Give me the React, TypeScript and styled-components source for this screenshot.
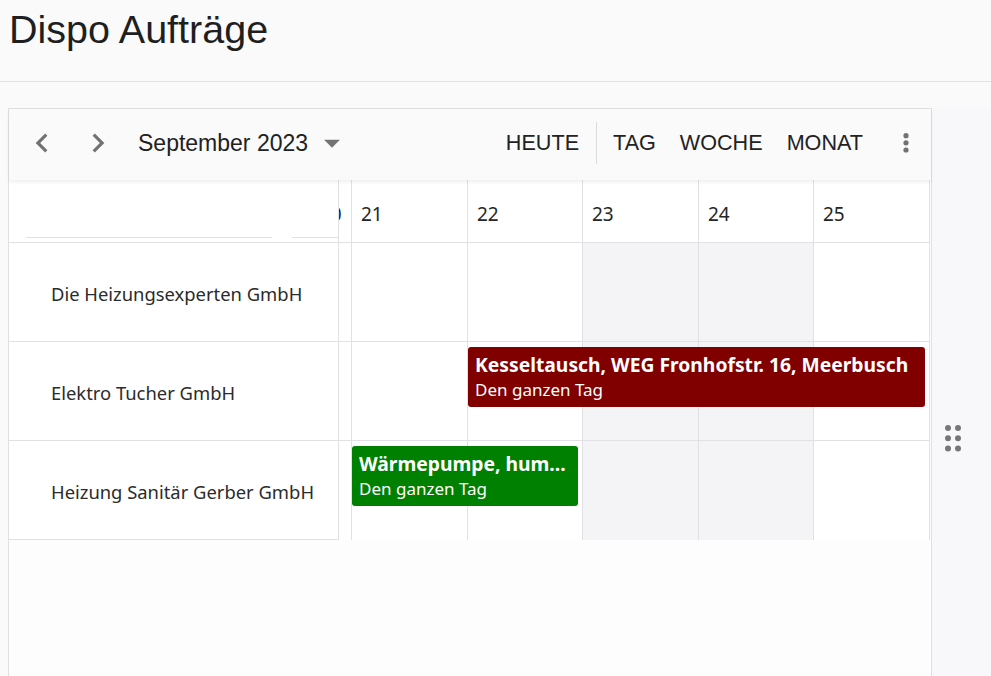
import { createGlobalStyle, styled } from "styled-components";

const GlobalStyle = createGlobalStyle`
  html, body {
    margin: 0;
    padding: 0;
    background: #fafafa;
    font-family: "Liberation Sans", Arial, sans-serif;
    color: #212121;
    overflow: hidden;
  }
`;

interface Booking {
  title: string;
  from: number;
  to: number;
  color: string;
}

interface Resource {
  name: string;
  bookings: Booking[];
}

const days = [21, 22, 23, 24, 25];
const weekend = [23, 24];

const resources: Resource[] = [
  { name: "Die Heizungsexperten GmbH", bookings: [] },
  {
    name: "Elektro Tucher GmbH",
    bookings: [
      {
        title: "Kesseltausch, WEG Fronhofstr. 16, Meerbusch",
        from: 22,
        to: 25,
        color: "#800000",
      },
    ],
  },
  {
    name: "Heizung Sanitär Gerber GmbH",
    bookings: [
      { title: "Wärmepumpe, hum...", from: 21, to: 22, color: "#008000" },
    ],
  },
];

// grid column of a day: 1 = resources, 2 = clipped day, 3.. = visible days
const colOf = (day: number) => days.indexOf(day) + 3;

export default function App() {
  return (
    <>
      <GlobalStyle />
      <Header>
        <Title>Dispo Aufträge</Title>
      </Header>
      <Content>
        <Scheduler>
          <Toolbar>
            <NavButton aria-label="zurück">
              <svg width="38" height="38" viewBox="0 0 24 24">
                <path d="M15.41 7.41L14 6l-6 6 6 6 1.41-1.41L10.83 12z" />
              </svg>
            </NavButton>
            <NavButton aria-label="weiter">
              <svg width="38" height="38" viewBox="0 0 24 24">
                <path d="M8.59 16.59L10 18l6-6-6-6-1.41 1.41L13.17 12z" />
              </svg>
            </NavButton>
            <DateTitle>September 2023</DateTitle>
            <Caret>
              <svg width="38" height="38" viewBox="0 0 24 24">
                <path d="M7 10l5 5 5-5z" />
              </svg>
            </Caret>
            <Spacer />
            <ViewButton>HEUTE</ViewButton>
            <Separator />
            <ViewButton>TAG</ViewButton>
            <ViewButton>WOCHE</ViewButton>
            <ViewButton>MONAT</ViewButton>
            <MoreButton aria-label="mehr">
              <svg width="10" height="24" viewBox="0 0 10 24">
                <circle cx="5" cy="4.7" r="2.6" />
                <circle cx="5" cy="11.8" r="2.6" />
                <circle cx="5" cy="19" r="2.6" />
              </svg>
            </MoreButton>
          </Toolbar>

          <GridRow $height={63}>
            <ResourceHead $col={1}>
              <FieldLine $width={247} />
              <FieldLine $width={46} />
            </ResourceHead>
            <DayHead $col={2} $clip>
              20
            </DayHead>
            {days.map((d) => (
              <DayHead key={d} $col={colOf(d)}>
                {d}
              </DayHead>
            ))}
          </GridRow>

          {resources.map((r, i) => {
            const last = i === resources.length - 1;
            return (
              <GridRow key={r.name} $height={99}>
                <ResourceCell $col={1} $last={last}>
                  {r.name}
                </ResourceCell>
                <DayCell $col={2} $last={last} />
                {days.map((d) => (
                  <DayCell
                    key={d}
                    $col={colOf(d)}
                    $last={last}
                    $weekend={weekend.includes(d)}
                  />
                ))}
                {r.bookings.map((b) => (
                  <Event
                    key={b.title}
                    $from={colOf(b.from)}
                    $to={colOf(b.to) + 1}
                    $color={b.color}
                  >
                    <EventTitle>{b.title}</EventTitle>
                    <EventTime>Den ganzen Tag</EventTime>
                  </Event>
                ))}
              </GridRow>
            );
          })}
        </Scheduler>
        <SidePane>
          <Grip>
            <svg width="18" height="28" viewBox="0 0 18 28">
              {[0, 1, 2].map((row) =>
                [0, 1].map((col) => (
                  <circle
                    key={`${row}-${col}`}
                    cx={4 + col * 10}
                    cy={4 + row * 10.2}
                    r="3"
                  />
                ))
              )}
            </svg>
          </Grip>
        </SidePane>
      </Content>
    </>
  );
}

const Header = styled.header`
  height: 82px;
  border-bottom: 1px solid #e2e2e4;
  padding: 9px 0 0 9px;
  box-sizing: border-box;
`;

const Title = styled.h1`
  margin: 0;
  font-size: 39.5px;
  line-height: 40px;
  font-weight: 400;
  color: #1f1f1f;
`;

const Content = styled.main`
  display: flex;
  padding: 26px 0 0 8px;
  height: calc(100vh - 82px);
  box-sizing: border-box;
`;

const Scheduler = styled.section`
  width: 924px;
  flex: none;
  border: 1px solid #e0e0e0;
  border-bottom: none;
  background: #fdfdfd;
  box-sizing: border-box;
`;

const Toolbar = styled.div`
  height: 71px;
  display: flex;
  align-items: center;
  padding: 0 5px 3px 14px;
  box-sizing: border-box;
  background: #fafafa;
  box-shadow: 0 2px 4px rgba(0, 0, 0, 0.07);
  position: relative;
  z-index: 1;
`;

const NavButton = styled.button`
  width: 38px;
  height: 38px;
  margin-right: 18px;
  padding: 0;
  border: none;
  background: none;
  display: flex;
  align-items: center;
  justify-content: center;
  fill: #727272;
  cursor: pointer;
`;

const DateTitle = styled.span`
  margin-left: 3px;
  font-size: 23px;
  color: #212121;
`;

const Caret = styled.span`
  display: flex;
  margin-left: 5px;
  fill: #737373;
`;

const Spacer = styled.div`
  flex: 1;
`;

const ViewButton = styled.button`
  height: 40px;
  padding: 0 12px;
  border: none;
  background: none;
  font-family: "Liberation Sans", Arial, sans-serif;
  font-size: 21.6px;
  color: #222;
  cursor: pointer;
`;

const Separator = styled.div`
  width: 1px;
  height: 42px;
  margin: 0 4px 0 5px;
  background: #dcdcdc;
`;

const MoreButton = styled.button`
  width: 40px;
  height: 40px;
  margin-left: 11px;
  padding: 0;
  border: none;
  background: none;
  display: flex;
  align-items: center;
  justify-content: center;
  fill: #727272;
`;

const GridRow = styled.div<{ $height: number }>`
  display: grid;
  grid-template-columns: 330px 13px 116px 115px 116px 115px 116px;
  height: ${(p) => p.$height}px;
`;

const Cell = styled.div<{ $col: number; $last?: boolean }>`
  grid-row: 1;
  grid-column: ${(p) => p.$col};
  box-sizing: border-box;
  border-right: 1px solid #e1e0e4;
  border-bottom: 1px solid #e1e0e4;
  background: #fff;
`;

const ResourceHead = styled(Cell)`
  display: flex;
  align-items: flex-end;
  gap: 20px;
  padding: 0 0 4px 17px;
`;

const FieldLine = styled.span<{ $width: number }>`
  width: ${(p) => p.$width}px;
  height: 1px;
  background: #e2e2e2;
`;

const DayHead = styled(Cell)<{ $clip?: boolean }>`
  display: flex;
  align-items: center;
  padding: 6px 0 0 ${(p) => (p.$clip ? "0" : "9px")};
  overflow: hidden;
  white-space: nowrap;
  font-family: "Noto Sans", "Open Sans", sans-serif;
  font-size: 19px;
  color: #252525;
  text-indent: ${(p) => (p.$clip ? "-19px" : "0")};
`;

const ResourceCell = styled(Cell)`
  display: flex;
  align-items: center;
  padding: 2px 0 0 42px;
  font-family: "Noto Sans", "Open Sans", sans-serif;
  font-size: 18.4px;
  color: #2b2b2b;
`;

const DayCell = styled(Cell)<{ $weekend?: boolean }>`
  background: ${(p) => (p.$weekend ? "#f4f3f6" : "#fff")};
  border-bottom: ${(p) => (p.$last ? "none" : "1px solid #e1e0e4")};
`;

const Event = styled.div<{ $from: number; $to: number; $color: string }>`
  grid-row: 1;
  grid-column: ${(p) => p.$from} / ${(p) => p.$to};
  align-self: start;
  z-index: 1;
  height: 60px;
  margin: 5px 5px 0 0;
  padding: 5px 7px;
  box-sizing: border-box;
  border-radius: 3px;
  background: ${(p) => p.$color};
  color: #fff;
  font-family: "Noto Sans", "Open Sans", sans-serif;
  overflow: hidden;
`;

const EventTitle = styled.div`
  font-size: 19.3px;
  font-weight: 700;
  line-height: 26px;
  white-space: nowrap;
  overflow: hidden;
`;

const EventTime = styled.div`
  margin-top: 1px;
  font-size: 17px;
  line-height: 22px;
`;

const SidePane = styled.aside`
  flex: 1;
  background: #f8f8fa;
  display: flex;
  justify-content: center;
  padding: 316px 18px 0 0;
`;

const Grip = styled.div`
  height: 28px;
  fill: #777;
`;
